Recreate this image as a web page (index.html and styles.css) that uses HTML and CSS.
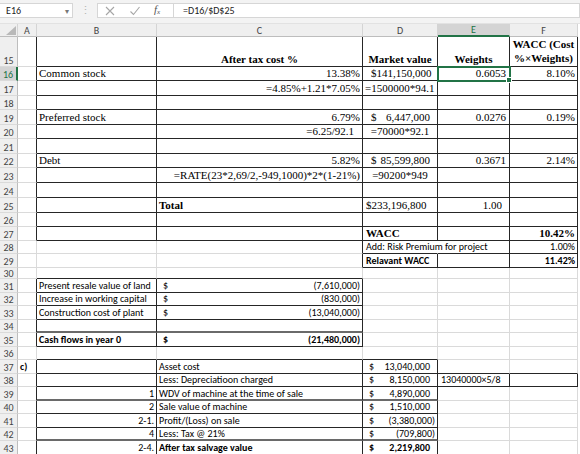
FILE: index.html
```html
<!DOCTYPE html>
<html lang="en">

<head>
    <meta charset="UTF-8">
    <title>WACC sheet</title>
    <link rel="stylesheet" href="styles.css">
</head>

<body>
<div class="fbar">
    <div class="namebox"><span>E16</span><span class="dd">&#9662;</span></div>
    <div class="grip">&#8942;</div>
    <div class="btns">
        <svg width="12" height="12" viewBox="0 0 12 12"><path d="M2 2L10 10M10 2L2 10" stroke="#a6a6a6" stroke-width="1.1" fill="none"/></svg>
        <svg width="12" height="12" viewBox="0 0 12 12"><path d="M1.5 6.5L4.5 9.5L10.5 2" stroke="#a6a6a6" stroke-width="1.1" fill="none"/></svg>
        <span class="fx">f<sub>x</sub></span>
    </div>
    <div class="formula">=D16/$D$25</div>
</div>

<table class="sheet">
    <colgroup>
        <col class="w-rh"><col class="w-a"><col class="w-b"><col class="w-c"><col class="w-d"><col class="w-e"><col class="w-f">
    </colgroup>
    <tr class="hdr">
        <th class="corner"><svg width="10" height="9" viewBox="0 0 10 9"><path d="M10 0V9H0Z" fill="#b9b9b9"/></svg></th>
        <th>A</th><th>B</th><th>C</th><th>D</th><th class="on">E</th><th>F</th>
    </tr>
    <tr class="h30 ser">
        <th class="rh">15</th><td class="kr"></td><td class="k"></td>
        <td class="k b c">After tax cost %</td><td class="k b c">Market value</td><td class="k b c">Weights</td>
        <td class="k b c wrap">WACC (Cost %×Weights)</td>
    </tr>
    <tr class="h14 ser">
        <th class="rh on">16</th><td class="kr"></td><td class="k">Common stock</td>
        <td class="k r">13.38%</td><td class="k acc sr"><div><i>$</i><i>141,150,000</i></div></td>
        <td class="k r pe sel">0.6053</td><td class="k r">8.10%</td>
    </tr>
    <tr class="h15 ser">
        <th class="rh">17</th><td class="kr"></td><td class="k"></td>
        <td class="k r">=4.85%+1.21*7.05%</td><td class="k r pd">=1500000*94.1</td><td class="k"></td><td class="k"></td>
    </tr>
    <tr class="h14 ser">
        <th class="rh">18</th><td class="kr"></td><td class="k"></td><td class="k"></td><td class="k"></td><td class="k"></td><td class="k"></td>
    </tr>
    <tr class="h15 ser">
        <th class="rh">19</th><td class="kr"></td><td class="k">Preferred stock</td>
        <td class="k r">6.79%</td><td class="k acc sr"><div><i>$</i><i>6,447,000</i></div></td>
        <td class="k r pe">0.0276</td><td class="k r">0.19%</td>
    </tr>
    <tr class="h14 ser">
        <th class="rh">20</th><td class="kr"></td><td class="k"></td>
        <td class="k r pc">=6.25/92.1</td><td class="k c">=70000*92.1</td><td class="k"></td><td class="k"></td>
    </tr>
    <tr class="h15 ser">
        <th class="rh">21</th><td class="kr"></td><td class="k"></td><td class="k"></td><td class="k"></td><td class="k"></td><td class="k"></td>
    </tr>
    <tr class="h14 ser">
        <th class="rh">22</th><td class="kr"></td><td class="k">Debt</td>
        <td class="k r">5.82%</td><td class="k acc sr"><div><i>$</i><i>85,599,800</i></div></td>
        <td class="k r pe">0.3671</td><td class="k r">2.14%</td>
    </tr>
    <tr class="h15 ser">
        <th class="rh">23</th><td class="kr"></td><td class="k"></td>
        <td class="k r">=RATE(23*2,69/2,-949,1000)*2*(1-21%)</td><td class="k c">=90200*949</td><td class="k"></td><td class="k"></td>
    </tr>
    <tr class="h15 ser">
        <th class="rh">24</th><td class="kr"></td><td class="k"></td><td class="k"></td><td class="k"></td><td class="k"></td><td class="k"></td>
    </tr>
    <tr class="h15 ser">
        <th class="rh">25</th><td class="kr"></td><td class="k"></td>
        <td class="k b">Total</td><td class="k pl">$233,196,800</td><td class="k r pt">1.00</td><td class="k"></td>
    </tr>
    <tr class="h14 ser">
        <th class="rh">26</th><td class="kr"></td><td class="k"></td><td class="k"></td><td class="k"></td><td class="k"></td><td class="k"></td>
    </tr>
    <tr class="h14 ser">
        <th class="rh">27</th><td class="kr"></td><td class="k"></td><td class="k"></td>
        <td class="k b pl">WACC</td><td class="k"></td><td class="k b r">10.42%</td>
    </tr>
    <tr class="h13">
        <th class="rh">28</th><td></td><td></td><td class="kr"></td>
        <td class="kb open pl">Add: Risk Premium for project</td><td class="k"></td><td class="k r">1.00%</td>
    </tr>
    <tr class="h14">
        <th class="rh">29</th><td></td><td></td><td class="kr"></td>
        <td class="k b pl">Relavant WACC</td><td class="k"></td><td class="k b r">11.42%</td>
    </tr>
    <tr class="h11">
        <th class="rh tiny">30</th><td></td><td class="kb"></td><td class="kb"></td><td></td><td></td><td></td>
    </tr>
    <tr class="h14">
        <th class="rh">31</th><td class="kr"></td><td class="k">Present resale value of land</td>
        <td class="k acc neg"><div><i>$</i><i>(7,610,000)</i></div></td><td></td><td></td><td></td>
    </tr>
    <tr class="h13">
        <th class="rh">32</th><td class="kr"></td><td class="k">Increase in working capital</td>
        <td class="k acc neg"><div><i>$</i><i>(830,000)</i></div></td><td></td><td></td><td></td>
    </tr>
    <tr class="h14">
        <th class="rh">33</th><td class="kr"></td><td class="k">Construction cost of plant</td>
        <td class="k acc neg"><div><i>$</i><i>(13,040,000)</i></div></td><td></td><td></td><td></td>
    </tr>
    <tr class="h13">
        <th class="rh">34</th><td class="kr"></td><td class="k k2"></td><td class="k k2"></td><td></td><td></td><td></td>
    </tr>
    <tr class="h14">
        <th class="rh">35</th><td class="kr"></td><td class="k b">Cash flows in year 0</td>
        <td class="k b acc neg"><div><i>$</i><i>(21,480,000)</i></div></td><td></td><td></td><td></td>
    </tr>
    <tr class="h13">
        <th class="rh">36</th><td></td><td class="kb"></td><td class="kb"></td><td class="kb"></td><td></td><td></td>
    </tr>
    <tr class="h14">
        <th class="rh">37</th><td class="kr b">c)</td><td class="k"></td><td class="k">Asset cost</td>
        <td class="k acc"><div><i>$</i><i>13,040,000</i></div></td><td class="kb"></td><td class="kb"></td>
    </tr>
    <tr class="h13">
        <th class="rh">38</th><td class="kr"></td><td class="k"></td><td class="k">Less: Depreciatioon charged</td>
        <td class="k acc"><div><i>$</i><i>8,150,000</i></div></td><td class="k pl">13040000×5/8</td><td class="k"></td>
    </tr>
    <tr class="h14">
        <th class="rh">39</th><td class="kr"></td><td class="k k2 r">1</td><td class="k k2">WDV of machine at the time of sale</td>
        <td class="k k2 acc"><div><i>$</i><i>4,890,000</i></div></td><td></td><td></td>
    </tr>
    <tr class="h13">
        <th class="rh">40</th><td class="kr"></td><td class="k r">2</td><td class="k">Sale value of machine</td>
        <td class="k acc"><div><i>$</i><i>1,510,000</i></div></td><td></td><td></td>
    </tr>
    <tr class="h14">
        <th class="rh">41</th><td class="kr"></td><td class="k r">2-1.</td><td class="k">Profit/(Loss) on sale</td>
        <td class="k acc neg"><div><i>$</i><i>(3,380,000)</i></div></td><td></td><td></td>
    </tr>
    <tr class="h13">
        <th class="rh">42</th><td class="kr"></td><td class="k k2 r">4</td><td class="k k2">Less: Tax @ 21%</td>
        <td class="k k2 acc neg"><div><i>$</i><i>(709,800)</i></div></td><td></td><td></td>
    </tr>
    <tr class="h14">
        <th class="rh">43</th><td class="kr"></td><td class="k r">2-4.</td><td class="k b">After tax salvage value</td>
        <td class="k b acc"><div><i>$</i><i>2,219,800</i></div></td><td></td><td></td>
    </tr>
</table>
</body>

</html>
```

FILE: styles.css
```css
html,
body {
    margin: 0;
    background: #fff;
    font-family: Carlito, Lato, "Liberation Sans", sans-serif;
    font-size: 10px;
    color: #000;
}

body {
    width: 580px;
    height: 454px;
    overflow: hidden;
}

/* formula bar */
.fbar {
    display: flex;
    align-items: flex-start;
    height: 24px;
    padding-top: 3px;
    box-sizing: border-box;
    background: #f3f3f3;
    border-bottom: 1px solid #e2e2e2;
}

.namebox {
    display: flex;
    align-items: center;
    justify-content: space-between;
    width: 73px;
    height: 15px;
    box-sizing: border-box;
    padding: 0 3px 0 6px;
    background: #fff;
    border: 1px solid #d6d6d6;
    border-left: 0;
    color: #222;
}

.dd {
    font-size: 8px;
    color: #777;
}

.grip {
    width: 24px;
    text-align: center;
    color: #b5b5b5;
    line-height: 15px;
    font-size: 11px;
}

.btns {
    display: flex;
    align-items: center;
    gap: 13px;
    width: 76px;
    height: 15px;
    box-sizing: border-box;
    padding-left: 6px;
    background: #fff;
    border: 1px solid #d6d6d6;
    border-right: 0;
}

.fx {
    font-family: "Liberation Serif", serif;
    font-style: italic;
    font-size: 11px;
    color: #555;
    line-height: 10px;
}

.fx sub {
    font-size: 7px;
    vertical-align: -1px;
}

.formula {
    flex: 1;
    height: 15px;
    box-sizing: border-box;
    padding-left: 9px;
    background: #fff;
    border: 1px solid #d6d6d6;
    line-height: 13px;
    color: #222;
}

/* grid */
.sheet {
    border-collapse: separate;
    border-spacing: 0;
    table-layout: fixed;
    width: 578px;
}

.w-rh { width: 18px; }
.w-a { width: 19px; }
.w-b { width: 120px; }
.w-c { width: 206px; }
.w-d { width: 75px; }
.w-e { width: 72px; }
.w-f { width: 68px; }

.sheet th,
.sheet td {
    box-sizing: border-box;
    padding: 0 2px 1px;
    white-space: nowrap;
    overflow: visible;
}

.sheet th {
    font-weight: normal;
}

.sheet td {
    border-right: 1px solid #dadada;
    border-bottom: 1px solid #dadada;
    vertical-align: bottom;
    line-height: 11px;
}

.hdr th {
    height: 13px;
    padding: 0;
    background: #efefef;
    color: #444;
    text-align: center;
    line-height: 11px;
    border-right: 1px solid #d4d4d4;
    border-bottom: 1px solid #bdbdbd;
}

.hdr th.on {
    background: #d4d4d4;
    color: #217346;
    border-bottom: 2px solid #217346;
}

.hdr .corner {
    text-align: right;
    vertical-align: bottom;
    line-height: 0;
    padding: 0 1px 1px 0;
}

.sheet .rh {
    padding: 0;
    background: #efefef;
    color: #444;
    text-align: center;
    vertical-align: bottom;
    line-height: 11px;
    border-right: 1px solid #bdbdbd;
    border-bottom: 1px solid #dadada;
}

.sheet .rh.on {
    background: #d4d4d4;
    color: #217346;
    border-right: 2px solid #217346;
}

.sheet .rh.tiny {
    line-height: 9px;
    vertical-align: middle;
}

.h30 { height: 30px; }
.h15 { height: 15px; }
.h14 { height: 14px; }
.h13 { height: 13px; }
.h11 { height: 11px; }

.ser td {
    font-family: "Liberation Serif", "Times New Roman", serif;
    font-size: 11px;
}

/* borders */
.sheet td.k {
    border-right-color: #262626;
    border-bottom-color: #262626;
}

.sheet td.kr { border-right-color: #262626; }
.sheet td.kb { border-bottom-color: #262626; }

.sheet td.k2 {
    border-bottom: 2px solid #6a6a6a;
    padding-bottom: 0;
}

.sheet td.open { border-right-color: transparent; }

/* alignment */
.sheet td.b { font-weight: bold; }
.sheet td.c { text-align: center; }
.sheet td.r { text-align: right; }
.sheet td.pd { padding-right: 5px; }
.sheet td.pc { padding-right: 8px; }
.sheet td.pe { padding-right: 3px; }
.sheet td.pt { padding-right: 7px; }
.sheet td.pl { padding-left: 3px; }

.sheet td.wrap {
    white-space: normal;
    line-height: 14px;
    padding: 0 1px 1px;
}

.acc div {
    display: flex;
    justify-content: space-between;
    padding: 0 5px 0 4px;
}

.acc.sr div {
    padding-left: 6px;
}

.acc.neg div {
    padding-right: 0;
}

.acc i {
    font-style: normal;
}

/* selected cell */
.sheet td.sel {
    position: relative;
    outline: 2px solid #217346;
    outline-offset: -1px;
}

.sheet td.sel::after {
    content: "";
    position: absolute;
    right: -3px;
    bottom: -3px;
    width: 4px;
    height: 4px;
    background: #217346;
    border: 1px solid #fff;
}
```
